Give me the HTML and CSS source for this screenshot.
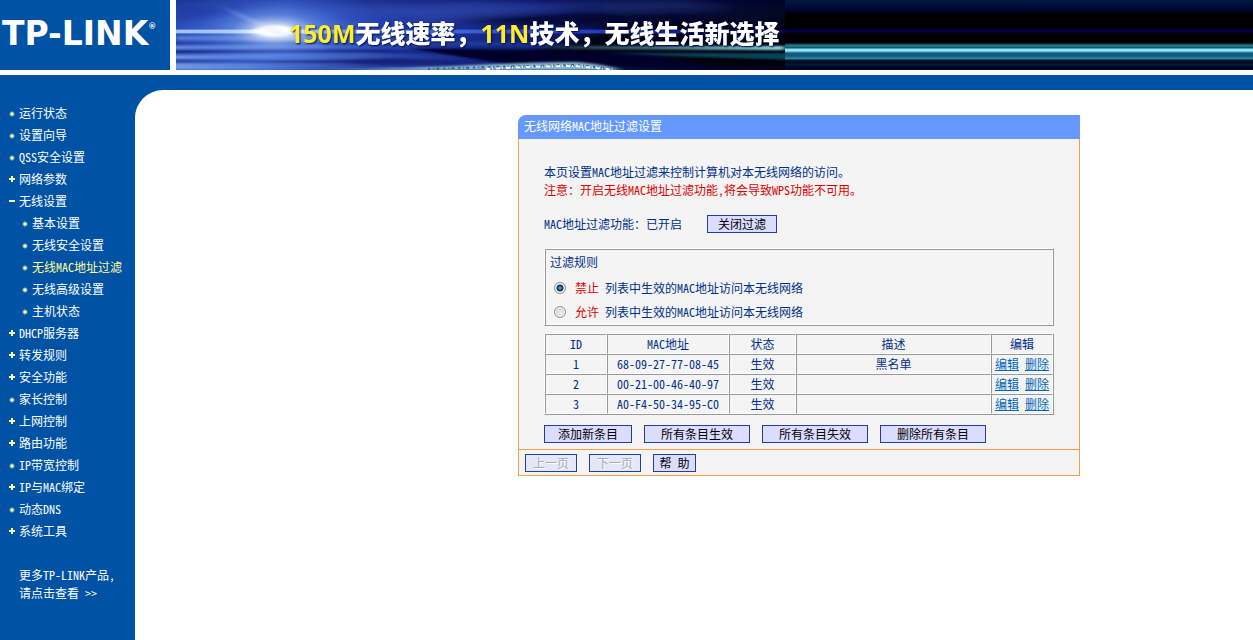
FILE: index.html
```html
<!DOCTYPE html>
<html lang="zh-CN">
<head>
<meta charset="utf-8">
<title>TP-LINK</title>
<link rel="stylesheet" href="styles.css">
</head>
<body>
<header class="top">
  <div class="logo">TP-LINK<sup class="reg">®</sup></div>
  <div class="banner">
    <svg class="scene" width="609" height="70" viewBox="0 0 609 70" aria-hidden="true">
      <defs>
        <linearGradient id="sky" x1="0" y1="0" x2="1" y2="0">
          <stop offset="0" stop-color="#2a4cb4"/><stop offset=".18" stop-color="#3a60cc"/>
          <stop offset=".38" stop-color="#2038a0"/><stop offset=".6" stop-color="#101c70"/>
          <stop offset=".85" stop-color="#050930"/><stop offset="1" stop-color="#000010"/>
        </linearGradient>
        <linearGradient id="shade" x1="0" y1="0" x2="0" y2="1">
          <stop offset="0" stop-color="#000a50" stop-opacity=".3"/><stop offset=".45" stop-color="#2a50d0" stop-opacity="0"/>
          <stop offset="1" stop-color="#000a40" stop-opacity=".2"/>
        </linearGradient>
        <radialGradient id="glow">
          <stop offset="0" stop-color="#fff"/><stop offset=".18" stop-color="#e8f4ff" stop-opacity=".9"/>
          <stop offset=".36" stop-color="#84aef8" stop-opacity=".6"/><stop offset=".65" stop-color="#4a78ec" stop-opacity=".3"/>
          <stop offset="1" stop-color="#3058d0" stop-opacity="0"/>
        </radialGradient>
        <linearGradient id="beam" x1="0" y1="0" x2="1" y2="0">
          <stop offset="0" stop-color="#a8d0ff"/><stop offset=".17" stop-color="#fff"/>
          <stop offset=".35" stop-color="#4a78e8"/><stop offset=".8" stop-color="#1828b0"/><stop offset="1" stop-color="#080850"/>
        </linearGradient>
        <linearGradient id="sea" x1="0" y1="0" x2="1" y2="0">
          <stop offset="0" stop-color="#7399e4"/><stop offset=".3" stop-color="#5a84dc"/>
          <stop offset=".7" stop-color="#3450ac" stop-opacity=".5"/><stop offset="1" stop-color="#101c60" stop-opacity="0"/>
        </linearGradient>
        <linearGradient id="cyan" x1="0" y1="0" x2="1" y2="0">
          <stop offset="0" stop-color="#7fd4f0" stop-opacity="0"/><stop offset="1" stop-color="#8fe0f4"/>
        </linearGradient>
        <filter id="soft" x="-10%" y="-60%" width="120%" height="220%"><feGaussianBlur stdDeviation="3 0.8"/></filter>
        <filter id="haze" x="-20%" y="-60%" width="140%" height="220%"><feGaussianBlur stdDeviation="10 3"/></filter>
      </defs>
      <rect width="609" height="70" fill="url(#sky)"/>
      <rect width="609" height="70" fill="url(#shade)"/>
      <g filter="url(#haze)">
        <path d="M0 8L80 2L50 16L0 22Z" fill="#1c389c"/>
        <path d="M130 10L300 2L420 6L260 20Z" fill="#3a54b4" opacity=".5"/>
        <path d="M380 4L500 0L560 8L440 12Z" fill="#203070" opacity=".6"/>
        <path d="M270 18L420 12L560 16L560 26L350 26Z" fill="#02041c" opacity=".7"/>
        <path d="M440 26H620V66H440L350 54Z" fill="#000006" opacity=".8"/>
      </g>
      <g filter="url(#soft)">
        <path d="M0 36L230 37L330 41L0 40Z" fill="url(#sea)" opacity=".7"/>
        <path d="M-10 41H240L420 45H-10Z" fill="#2440a4"/>
        <path d="M-10 46L150 45L330 48L-10 49Z" fill="url(#sea)"/>
        <path d="M-10 50L200 49L300 53L-10 53Z" fill="#142888"/>
        <path d="M-10 55L190 53L330 58L200 60L-10 59Z" fill="url(#sea)"/>
        <path d="M60 62L220 58L320 63L190 65Z" fill="#14247c"/>
        <path d="M-10 63L170 63L270 70H-10Z" fill="url(#sea)"/>
        <path d="M230 48L470 52L540 68L330 64Z" fill="#03062c"/>
      </g>
      <rect y="29" width="609" height="5" fill="url(#beam)" opacity=".4"/>
      <rect y="30" width="609" height="3" fill="url(#beam)"/>
      <ellipse cx="99" cy="31" rx="120" ry="46" fill="url(#glow)" opacity=".75"/>
      <ellipse cx="99" cy="31" rx="20" ry="6" fill="#fff" filter="url(#soft)"/>
      <path d="M40 4L99 28L150 50L95 33Z" fill="#cfe4ff" opacity=".3" filter="url(#soft)"/>
      <path d="M310 46H609V50L400 49Z" fill="url(#cyan)" filter="url(#soft)"/>
      <path d="M430 53H620V60L520 57Z" fill="#0f5f80" opacity=".7" filter="url(#soft)"/>
      <path d="M150 70Q240 68 300 65Q360 62 400 62Q428 64 446 70Z" fill="#8cb8d0" filter="url(#soft)"/>
      <path d="M252 69Q340 66 400 65L438 69" fill="none" stroke="#33647c" stroke-width="2" stroke-dasharray="2 3 1 2 3 4"/>
      <path d="M310 69Q360 66 400 66L440 70" fill="none" stroke="#e8fbff" stroke-width="2" stroke-dasharray="4 2 1 3"/>
    </svg>
    <div class="slogan"><span class="hot">150M</span>无线速率，<span class="hot">11N</span>技术，无线生活新选择</div>
  </div>
</header>
<div class="page">
  <nav class="side">
    <ul class="menu">
      <li class="dot"><a href="#">运行状态</a></li>
      <li class="dot"><a href="#">设置向导</a></li>
      <li class="dot"><a href="#">QSS安全设置</a></li>
      <li class="plus"><a href="#">网络参数</a></li>
      <li class="minus"><a href="#">无线设置</a>
        <ul class="submenu">
          <li class="dot"><a href="#">基本设置</a></li>
          <li class="dot"><a href="#">无线安全设置</a></li>
          <li class="dot"><a class="current" href="#">无线MAC地址过滤</a></li>
          <li class="dot"><a href="#">无线高级设置</a></li>
          <li class="dot"><a href="#">主机状态</a></li>
        </ul>
      </li>
      <li class="plus"><a href="#">DHCP服务器</a></li>
      <li class="plus"><a href="#">转发规则</a></li>
      <li class="plus"><a href="#">安全功能</a></li>
      <li class="dot"><a href="#">家长控制</a></li>
      <li class="plus"><a href="#">上网控制</a></li>
      <li class="plus"><a href="#">路由功能</a></li>
      <li class="dot"><a href="#">IP带宽控制</a></li>
      <li class="plus"><a href="#">IP与MAC绑定</a></li>
      <li class="dot"><a href="#">动态DNS</a></li>
      <li class="plus"><a href="#">系统工具</a></li>
    </ul>
    <a class="more" href="#">更多TP-LINK产品，<br>请点击查看 &gt;&gt;</a>
  </nav>
  <main class="main">
    <form class="panel">
      <h1 class="title">无线网络MAC地址过滤设置</h1>
      <div class="body">
        <p class="note">本页设置MAC地址过滤来控制计算机对本无线网络的访问。</p>
        <p class="note warn">注意：开启无线MAC地址过滤功能，将会导致WPS功能不可用。</p>
        <div class="switch"><span>MAC地址过滤功能：已开启</span><button class="btn w70" type="button">关闭过滤</button></div>
        <fieldset class="rules">
          <legend>过滤规则</legend>
          <label class="rule"><input type="radio" name="rule" checked><span class="warn">禁止</span><span>列表中生效的MAC地址访问本无线网络</span></label>
          <label class="rule"><input type="radio" name="rule"><span class="warn">允许</span><span>列表中生效的MAC地址访问本无线网络</span></label>
        </fieldset>
        <table class="list">
          <colgroup><col class="c-id"><col class="c-mac"><col class="c-state"><col><col class="c-edit"></colgroup>
          <thead><tr><th>ID</th><th>MAC地址</th><th>状态</th><th>描述</th><th>编辑</th></tr></thead>
          <tbody>
            <tr><td>1</td><td>68-09-27-77-08-45</td><td>生效</td><td>黑名单</td><td><a href="#">编辑</a> <a href="#">删除</a></td></tr>
            <tr><td>2</td><td>00-21-00-46-40-97</td><td>生效</td><td></td><td><a href="#">编辑</a> <a href="#">删除</a></td></tr>
            <tr><td>3</td><td>A0-F4-50-34-95-C0</td><td>生效</td><td></td><td><a href="#">编辑</a> <a href="#">删除</a></td></tr>
          </tbody>
        </table>
        <div class="actions">
          <button class="btn w88" type="button">添加新条目</button>
          <button class="btn w106" type="button">所有条目生效</button>
          <button class="btn w106" type="button">所有条目失效</button>
          <button class="btn w106" type="button">删除所有条目</button>
        </div>
      </div>
      <div class="foot">
        <button class="btn w52" type="button" disabled>上一页</button>
        <button class="btn w52" type="button" disabled>下一页</button>
        <button class="btn w43" type="button">帮 助</button>
      </div>
    </form>
  </main>
</div>
</body>
</html>
```
FILE: styles.css
```css
* { box-sizing: border-box; }
body {
  margin: 0;
  min-height: 100vh;
  display: flex;
  flex-direction: column;
  background: #fff;
  color: #003088;
  font: 12px/18px "Noto Sans CJK SC", sans-serif;
  font-feature-settings: "hwid";
}
ul, p, h1 { margin: 0; padding: 0; }
ul { list-style: none; }

.top { display: flex; gap: 6px; height: 70px; margin-bottom: 5px; }
.logo {
  width: 170px;
  padding-left: 2px;
  background: #0052a5;
  color: #fff;
  font: bold 33px/68px "DejaVu Sans", sans-serif;
  white-space: nowrap;
}
.reg { font-size: 8px; line-height: 8px; vertical-align: 16px; }
.banner {
  flex: 1;
  display: grid;
  overflow: hidden;
  background: linear-gradient(#001a40 0, #00083a 8px, #000 15px, #000 29px, #00004c 30px, #00004c 32px, #000 33px, #000 43px,
    #0a4a5c 44px, #2c8090 46px, #0a4a5c 48px, #8fe8fa 49px, #8fe0f4 51px, #0d5d80 53px, #0a5a7c 56px, #2a84a0 58px, #2a84a0 59px,
    #001024 60px, #001024 63px, #001c40 65px, #000218 67px, #000c30 70px);
}
.scene, .slogan { grid-area: 1 / 1; }
.slogan {
  z-index: 1;
  align-self: center;
  padding: 0 0 4px 113px;
  color: #fff;
  font: 900 25px/36px "Open Sans", "Noto Sans CJK SC", sans-serif;
  font-feature-settings: normal;
  text-shadow: 1px 1px 2px #001050;
  white-space: nowrap;
}
.hot { font-weight: 700; color: #ffec2e; }

.page { flex: 1; display: flex; background: #0052a5; }
.side { width: 135px; padding: 27px 0 38px; }
.side a { color: #fff; text-decoration: none; white-space: nowrap; }
.menu li { padding-left: 19px; line-height: 22px; background: no-repeat; }
.menu .submenu { margin-left: -6px; }
.menu .dot { background-image: radial-gradient(circle at 12px 12px, #ffffa8 1px, transparent 3px); }
.menu .plus {
  background-image: linear-gradient(#ffff99, #ffff99), linear-gradient(#ffff99, #ffff99);
  background-size: 6px 2px, 2px 6px;
  background-position: 9px 10px, 11px 8px;
}
.menu .minus {
  background-image: linear-gradient(#ffff99, #ffff99);
  background-size: 6px 2px;
  background-position: 9px 10px;
}
.side .current { color: #ffff99; }
.more { display: block; margin: 24px 0 0 19px; }

.main {
  flex: 1;
  margin-top: 15px;
  padding: 25px 0 25px 210px;
  border-top-left-radius: 28px;
  background: #fff;
}
.panel { width: 562px; margin: 0 auto; }
.title {
  padding: 0 6px 2px;
  border-top-left-radius: 8px;
  background: #6699ff;
  color: #fff;
  font-size: 12px;
  font-weight: 400;
  line-height: 22px;
}
.body {
  padding: 24px 25px 6px;
  border: solid #f0a048;
  border-width: 0 1px 1px;
  background: #f4f4f4;
}
.warn { color: #e00000; }
.switch { display: flex; align-items: center; gap: 25px; margin: 16px 0 15px; }
.btn {
  height: 18px;
  padding: 0;
  border: 1px solid #2040a0;
  border-radius: 0;
  background: #dcdcff;
  color: #000;
  font: inherit;
  font-feature-settings: inherit;
  line-height: 16px;
}
.btn:disabled { background: #e6e6fb; color: #aaa; text-shadow: 1px 1px #fff; }
.w43 { width: 43px; }
.w52 { width: 52px; }
.w70 { width: 70px; }
.w88 { width: 88px; }
.w106 { width: 106px; }

.rules, .list { border: 1px solid; border-color: #fff #999 #999 #fff; }
.rules {
  margin: 0 0 7px;
  padding: 0;
  box-shadow: inset 1px 1px #999, inset -1px -1px #fff;
}
.rules legend { float: left; width: 100%; margin: 1px 0 2px; padding: 0 5px; line-height: 24px; }
.rule { clear: both; display: flex; align-items: center; gap: 6px; height: 24px; padding-left: 9px; }
.rules .rule:last-child { margin-bottom: 1px; }
.rule input {
  appearance: none;
  width: 12px;
  height: 12px;
  margin: 0 3px 0 0;
  border: 1px solid #8a8f94;
  border-radius: 50%;
  background: radial-gradient(circle at 6px 6px, #eee, #c4c4c4);
  box-shadow: inset 0 0 0 1px #fff;
}
.rule input:checked { background: radial-gradient(circle at 5px 5px, #6cc4e8 0, #124a74 2px, #123c60 3px, #e8e8e8 4px); }

.list { width: 100%; table-layout: fixed; border-spacing: 0; text-align: center; }
.list th, .list td {
  height: 20px;
  padding: 0;
  border: 1px solid;
  border-color: #999 #fff #fff #999;
  font-weight: 400;
  line-height: 18px;
}
.c-id, .c-edit { width: 62px; }
.c-mac { width: 122px; }
.c-state { width: 67px; }
.list a { color: #0066b8; }
.actions { display: flex; gap: 12px; margin-top: 10px; }
.foot {
  display: flex;
  gap: 12px;
  padding: 4px 6px 3px;
  border: solid #f0a048;
  border-width: 0 1px 1px;
  background: #f4f4f4;
}
```
